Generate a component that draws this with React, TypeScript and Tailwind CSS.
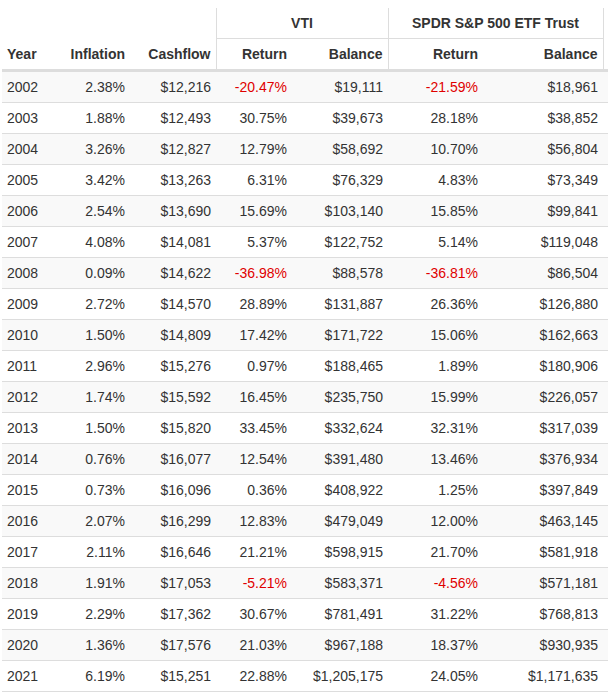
const rows: [string, string, string, string, string, string, string][] = [
  ['2002', '2.38%', '$12,216', '-20.47%', '$19,111', '-21.59%', '$18,961'],
  ['2003', '1.88%', '$12,493', '30.75%', '$39,673', '28.18%', '$38,852'],
  ['2004', '3.26%', '$12,827', '12.79%', '$58,692', '10.70%', '$56,804'],
  ['2005', '3.42%', '$13,263', '6.31%', '$76,329', '4.83%', '$73,349'],
  ['2006', '2.54%', '$13,690', '15.69%', '$103,140', '15.85%', '$99,841'],
  ['2007', '4.08%', '$14,081', '5.37%', '$122,752', '5.14%', '$119,048'],
  ['2008', '0.09%', '$14,622', '-36.98%', '$88,578', '-36.81%', '$86,504'],
  ['2009', '2.72%', '$14,570', '28.89%', '$131,887', '26.36%', '$126,880'],
  ['2010', '1.50%', '$14,809', '17.42%', '$171,722', '15.06%', '$162,663'],
  ['2011', '2.96%', '$15,276', '0.97%', '$188,465', '1.89%', '$180,906'],
  ['2012', '1.74%', '$15,592', '16.45%', '$235,750', '15.99%', '$226,057'],
  ['2013', '1.50%', '$15,820', '33.45%', '$332,624', '32.31%', '$317,039'],
  ['2014', '0.76%', '$16,077', '12.54%', '$391,480', '13.46%', '$376,934'],
  ['2015', '0.73%', '$16,096', '0.36%', '$408,922', '1.25%', '$397,849'],
  ['2016', '2.07%', '$16,299', '12.83%', '$479,049', '12.00%', '$463,145'],
  ['2017', '2.11%', '$16,646', '21.21%', '$598,915', '21.70%', '$581,918'],
  ['2018', '1.91%', '$17,053', '-5.21%', '$583,371', '-4.56%', '$571,181'],
  ['2019', '2.29%', '$17,362', '30.67%', '$781,491', '31.22%', '$768,813'],
  ['2020', '1.36%', '$17,576', '21.03%', '$967,188', '18.37%', '$930,935'],
  ['2021', '6.19%', '$15,251', '22.88%', '$1,205,175', '24.05%', '$1,171,635'],
]

const cell = 'px-[5px] py-[5px] leading-[20px]'

function Pct({ v }: { v: string }) {
  return <span className={v.startsWith('-') ? 'text-[#e00000]' : ''}>{v}</span>
}

export default function App() {
  return (
    <div className="min-h-screen bg-white overflow-hidden pl-[2px] pt-[8px]">
      <table
        className="table-fixed border-collapse w-[606px] text-[14px] text-[#333]"
        style={{ fontFamily: '"Liberation Sans", Arial, sans-serif' }}
      >
        <colgroup>
          <col className="w-[58px]" />
          <col className="w-[70px]" />
          <col className="w-[86px]" />
          <col className="w-[76px]" />
          <col className="w-[96px]" />
          <col className="w-[95px]" />
          <col className="w-[120px]" />
          <col className="w-[5px]" />
        </colgroup>
        <thead>
          <tr>
            <th colSpan={3} className={cell}></th>
            <th colSpan={2} className={`${cell} text-center font-bold border-l border-b border-[#ddd]`}>VTI</th>
            <th colSpan={2} className={`${cell} text-center font-bold border-l border-r border-b border-[#ddd]`}>
              SPDR S&amp;P 500 ETF Trust
            </th>
            <th></th>
          </tr>
          <tr className="border-b-[3px] border-[#ddd]">
            <th className={`${cell} text-left font-bold`}>Year</th>
            <th className={`${cell} text-right font-bold`}>Inflation</th>
            <th className={`${cell} text-right font-bold`}>Cashflow</th>
            <th className={`${cell} text-right font-bold border-l border-[#ddd]`}>Return</th>
            <th className={`${cell} text-right font-bold`}>Balance</th>
            <th className={`${cell} text-right font-bold border-l border-[#ddd]`}>Return</th>
            <th className={`${cell} text-right font-bold border-r border-[#ddd]`}>Balance</th>
            <th></th>
          </tr>
        </thead>
        <tbody>
          {rows.map((r, i) => (
            <tr key={r[0]} className={`border-b border-[#ddd] ${i % 2 === 0 ? 'bg-[#f9f9f9]' : 'bg-white'}`}>
              <td className={`${cell} text-left`}>{r[0]}</td>
              <td className={`${cell} text-right`}>{r[1]}</td>
              <td className={`${cell} text-right`}>{r[2]}</td>
              <td className={`${cell} text-right`}><Pct v={r[3]} /></td>
              <td className={`${cell} text-right`}>{r[4]}</td>
              <td className={`${cell} text-right`}><Pct v={r[5]} /></td>
              <td className={`${cell} text-right`}>{r[6]}</td>
              <td></td>
            </tr>
          ))}
        </tbody>
      </table>
    </div>
  )
}
